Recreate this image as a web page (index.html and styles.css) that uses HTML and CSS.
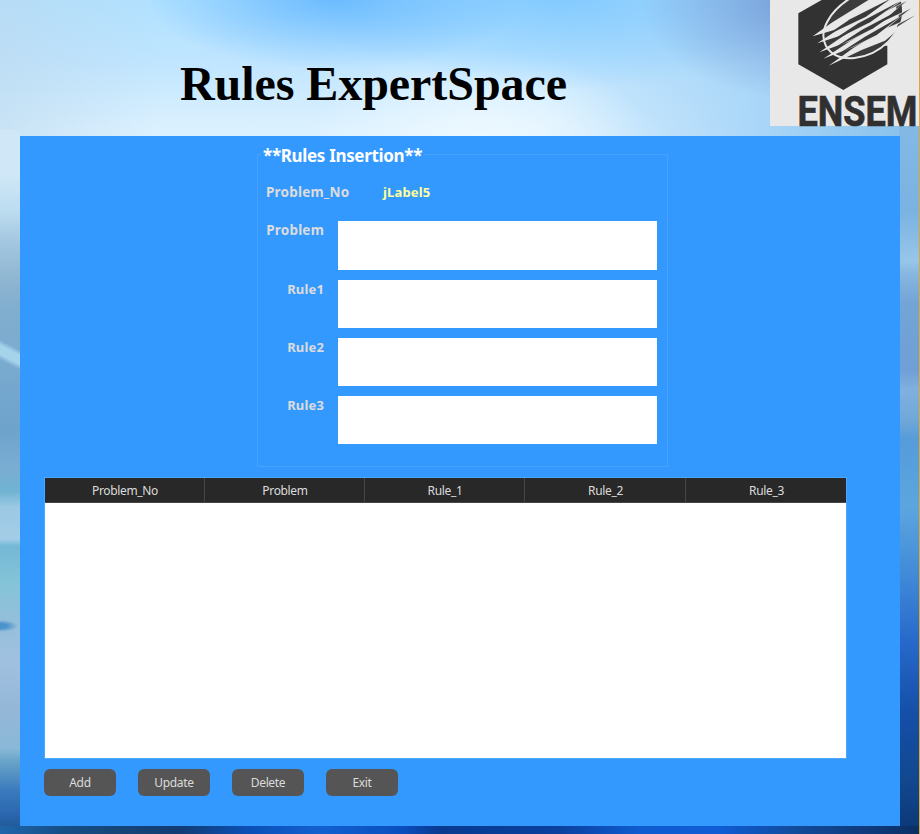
FILE: index.html
```html
<!DOCTYPE html>
<html lang="en">
<head>
<meta charset="utf-8">
<title>Rules ExpertSpace</title>
<link rel="stylesheet" href="styles.css">
</head>
<body>
<div class="window">
  <header class="header">
    <h1 class="title">Rules ExpertSpace</h1>
    <svg class="logo" viewBox="770 0 149 126" width="149" height="126" role="img" aria-label="ENSEM">
      <defs>
        <clipPath id="frame"><rect x="770" y="0" width="149" height="126"/></clipPath>
      </defs>
      <rect x="770" y="0" width="149" height="126" fill="#e8e8e8"/>
      <g clip-path="url(#frame)">
        <g transform="translate(760 0) scale(.33333)">
          <path d="M115 40 185 0H382V193L250 270 115 193Z" fill="#323232"/>
          <path d="M370 -5H440V137H370Z" fill="#e8e8e8"/>
          <path d="M275 -8C205 35 175 95 198 138C232 196 330 180 385 125C425 85 434 40 420 -8Z" fill="#3c3c3c"/>
          <path d="M275 -8C205 35 175 95 198 138C232 196 330 180 385 125C398 112 408 98 415 84" fill="none" stroke="#e8e8e8" stroke-width="6"/>
          <g fill="#e8e8e8">
            <path d="M158 109 215 68 335 -6H400L272 76Z"/>
            <path d="M172 130 240 85 400 -6H438L300 88Z"/>
            <path d="M178 157 250 108 345 50 438 3 350 80 265 125Z"/>
            <path d="M190 176 270 124 365 66 452 25 365 98 280 141Z"/>
            <path d="M206 197 280 144 375 86 465 47 375 122 305 150Z"/>
          </g>
          <g fill="#3a3a3a">
            <path d="M196 108 270 58 392 -4 318 50Z"/>
            <path d="M200 132 295 70 420 4 330 67Z"/>
            <path d="M218 147 305 90 424 27 340 85Z"/>
            <path d="M236 161 315 110 424 48 350 105Z"/>
          </g>
          <g fill="#505050">
            <path d="M408 20 440 3 410 27Z"/>
            <path d="M416 45 453 25 416 54Z"/>
            <path d="M414 73 466 46 410 82Z"/>
          </g>
        </g>
      </g>
      <text class="logo-text" x="797.500" y="125.500" textLength="120" lengthAdjust="spacingAndGlyphs">ENSEM</text>
    </svg>
  </header>
  <main class="panel">
    <fieldset class="insertion">
      <legend>**Rules Insertion**</legend>
      <div class="number-row"><span class="label wide">Problem_No</span><span class="value">jLabel5</span></div>
      <div class="row"><label class="label wide" for="problem">Problem</label><textarea id="problem" class="tall"></textarea></div>
      <div class="row"><label class="label" for="rule1">Rule1</label><textarea id="rule1"></textarea></div>
      <div class="row"><label class="label" for="rule2">Rule2</label><textarea id="rule2"></textarea></div>
      <div class="row"><label class="label" for="rule3">Rule3</label><textarea id="rule3"></textarea></div>
    </fieldset>
    <div class="table">
      <div class="table-head"><span>Problem_No</span><span>Problem</span><span>Rule_1</span><span>Rule_2</span><span>Rule_3</span></div>
    </div>
    <div class="actions">
      <button>Add</button><button>Update</button><button>Delete</button><button>Exit</button>
    </div>
  </main>
</div>
</body>
</html>
```
FILE: styles.css
```css
* { box-sizing: border-box; }
body { margin: 0; font-family: "Noto Sans", sans-serif; }
.window {
  width: 920px;
  height: 834px;
  overflow: hidden;
  border-right: 1px solid #dfa63a;
  background:
    /* bottom edge */
    linear-gradient(90deg, #1f66aa 0, #154f88 60px, #154578 115px, #123c74 180px, #0b50b8 250px, #1260d0 320px, #0a4fc0 400px, #083a90 440px, #0a419f 560px, #0f5cd0 640px, #0f5cd5 720px, #114a98 800px, #0b2f66 100%) 0 826px / 100% 8px no-repeat,
    /* light streak and dark wedge on the left */
    linear-gradient(207deg, transparent 30%, #a5d3ea 40%, #a5d3ea 56%, transparent 66%) 0 333px / 20px 46px no-repeat,
    radial-gradient(ellipse 18px 6px at 0 50%, #4b93cc 0, #4b93cc 40%, rgba(75,147,204,0) 100%) 0 619px / 20px 14px no-repeat,
    /* left edge */
    linear-gradient(180deg, #cfe7f6 0, #cfe7f6 45px, #bcdcf0 81px, #a3c7e0 112px, #8db4d0 153px, #80aecf 180px, #78a9cf 242px, #6ea3cc 301px, #7aadd2 337px, #6fb3d2 361px, #9cc8e4 377px, #a3cde7 409px, #74b8d6 416px, #84c4d8 453px, #93bfda 489px, #a0c1e0 530px, #95b7d7 579px, #8ab8d8 618px, #6ba6c9 630px, #3b7bbd 660px, #2b68b0 683px, #1c5290 100%) 0 130px / 20px 704px no-repeat,
    /* right edge */
    linear-gradient(180deg, #84b9e6 0, #7ab2e1 85px, #97c6e9 135px, #86b6e0 149px, #73a5d7 176px, #6f9fd6 244px, #80b0e0 263px, #70a8da 294px, #559cd9 313px, #5ca6df 381px, #408ad8 449px, #2668c9 518px, #154fa8 586px, #12488f 654px, #0b3775 100%) 899px 126px / 20px 708px no-repeat,
    /* sky */
    radial-gradient(ellipse 160px 100px at 800px 0, #749dd8 0, rgba(116,157,216,0) 100%),
    radial-gradient(ellipse 190px 75px at 335px -5px, #69baff 0, rgba(114,190,255,0) 100%),
    radial-gradient(ellipse 260px 95px at 560px -5px, #82caff 0, rgba(135,206,255,0) 100%),
    radial-gradient(ellipse 170px 90px at 480px 140px, #eef9ff 0, rgba(237,248,255,0) 100%),
    linear-gradient(90deg, rgba(165,207,246,0) 540px, #a9d6f8 760px, #86bfea 100%),
    linear-gradient(90deg, rgba(188,217,238,.6) 0, rgba(188,217,238,0) 160px),
    linear-gradient(180deg, #b0e1ff 0, #bfe5ff 60px, #dcf1ff 130px, #dcf1ff 100%);
}
.header { display: flex; justify-content: space-between; height: 136px; }
.title { margin: 56px 0 0 180px; font: bold 48px/56px "Liberation Serif", serif; letter-spacing: -.06px; color: #000; white-space: nowrap; }
.logo { display: block; flex: none; overflow: visible; }
.logo-text { font: bold 42px "Roboto", sans-serif; fill: #303030; stroke: #303030; stroke-width: .7px; }
.panel { width: 880px; height: 690px; margin-left: 20px; padding: 10px 24px 0; background: #3399ff; }
.insertion { width: 411px; height: 321px; margin: 0 0 0 213px; padding: 0 10px 0 8px; border: 1px solid #46a2ff; }
.insertion legend { margin-left: -5px; padding: 2px 2px 0; font-size: 17px; font-weight: 700; line-height: 15px; letter-spacing: -.33px; color: #fff; white-space: nowrap; }
.label, .value { font-size: 13px; font-weight: 700; line-height: 18px; color: #dcdcdc; letter-spacing: .15px; }
.label.wide { font-size: 13.500px; letter-spacing: .2px; }
.number-row { display: flex; height: 49px; padding-top: 20px; margin-bottom: 9px; }
.number-row .label { width: 117px; }
.value { color: #ffff99; }
.row { display: flex; justify-content: flex-end; gap: 14px; margin-bottom: 10px; }
.row textarea { display: block; width: 319px; height: 48px; margin: 0; border: 0; padding: 4px; background: #fff; resize: none; outline: 0; }
.row textarea.tall { height: 49px; }
.table { width: 803px; height: 282px; margin-top: 10px; border: 1px solid #4da6ff; background: #fff; }
.table-head { display: grid; grid-template-columns: 160px 160px 160px 161px 160px; grid-template-rows: 24px; height: 25px; background: #282828; border-bottom: 1px solid #464646; color: #dcdcdc; font-size: 12px; line-height: 26px; letter-spacing: -.35px; text-align: center; }
.table-head span { border-right: 1px solid #464646; padding-left: 1px; }
.table-head span:last-child { border-right: 0; }
.actions { display: flex; gap: 22px; margin-top: 10px; }
.actions button { width: 72px; height: 27px; border: 0; border-radius: 6px; padding: 0; background: #555; color: #dcdcdc; font: 12px "Noto Sans", sans-serif; letter-spacing: -.35px; }
```
